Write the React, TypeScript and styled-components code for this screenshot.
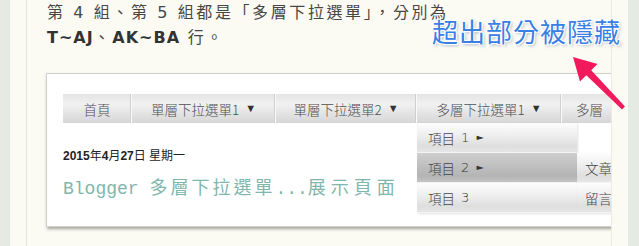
import React from "react";
import styled, { createGlobalStyle } from "styled-components";

const GlobalStyle = createGlobalStyle`
  html, body {
    margin: 0;
    padding: 0;
    background: #e5eae2;
    overflow: hidden;
  }
`;

const Page = styled.div`
  position: relative;
  width: 639px;
  height: 246px;
  overflow: hidden;
`;

const Column = styled.div`
  margin-left: 10px;
  width: 618px;
  height: 246px;
  padding-left: 16px;
  box-sizing: border-box;
  background: #fbfbf3;
`;

const Post = styled.div`
  width: 586px;
  height: 100%;
  box-sizing: border-box;
  padding-left: 19px;
  border-left: 1px solid #e3e3d9;
  border-right: 1px solid #ecece1;
  overflow: hidden;
`;

const Para = styled.p`
  margin: 0 0 0 1px;
  font-family: "DejaVu Sans", "Noto Sans CJK TC", sans-serif;
  font-size: 16px;
  line-height: 25px;
  letter-spacing: 2.6px;
  color: #474747;

  b {
    color: #333;
    letter-spacing: 1px;
  }
`;

const Shot = styled.div`
  position: relative;
  margin-top: 23px;
  width: 620px;
  height: 154px;
  box-sizing: border-box;
  padding: 20px 0 0 16px;
  background: #fff;
  border: 1px solid #d2d2cc;
  box-shadow: 1px 2px 3px rgba(0, 0, 0, 0.35);
`;

const Nav = styled.div`
  display: flex;
  height: 29px;
  background: linear-gradient(to bottom, #e4e4e4 0%, #f1f1f1 35%, #e2e2e2 70%, #d6d6d6 100%);
`;

const NavItem = styled.div<{ $w: number }>`
  flex: none;
  width: ${(p) => p.$w}px;
  box-sizing: border-box;
  display: flex;
  align-items: center;
  justify-content: center;
  white-space: nowrap;
  border-right: 1px solid #fafafa;
  box-shadow: inset -2px 0 0 -1px #cfcfcf;
  font-family: "Noto Sans CJK TC", sans-serif;
  font-size: 13.5px;
  font-weight: 300;
  color: #4e4e4e;
`;

const NavLast = styled(NavItem)`
  justify-content: flex-start;
  padding-left: 14px;
  border-right: none;
  box-shadow: none;
`;

const Caret = styled.span`
  margin-left: 6px;
  font-family: "DejaVu Sans", sans-serif;
  font-size: 11px;
  color: #333;
`;

const Drop = styled.div<{ $left: number; $top: number; $w: number }>`
  position: absolute;
  left: ${(p) => p.$left}px;
  top: ${(p) => p.$top}px;
  width: ${(p) => p.$w}px;
  display: flex;
  flex-direction: column;
  box-shadow: 1px 1px 2px rgba(0, 0, 0, 0.12);
`;

const DropItem = styled.div<{ $active?: boolean; $pad?: number }>`
  height: 30px;
  display: flex;
  align-items: center;
  padding-left: ${(p) => p.$pad ?? 11}px;
  white-space: nowrap;
  font-family: "Noto Sans CJK TC", sans-serif;
  font-size: 13.5px;
  font-weight: 300;
  color: #444;
  background: ${(p) =>
    p.$active
      ? "linear-gradient(to bottom, #cfcfcf 0%, #bdbdbd 50%, #b4b4b4 80%, #c4c4c4 100%)"
      : "linear-gradient(to bottom, #fdfdfd 0%, #efefef 40%, #dedede 80%, #e6e6e6 100%)"};
  border-bottom: 1px solid #f4f4f4;
  box-sizing: border-box;
`;

const Num = styled.span`
  margin-left: 6px;
  font-family: "DejaVu Sans", sans-serif;
  font-size: 13px;
  color: #333;
`;

const Pointer = styled.span`
  margin-left: 5px;
  font-family: "DejaVu Sans", sans-serif;
  font-size: 12px;
  transform: scaleY(0.6);
  display: inline-block;
  color: #333;
`;

const DateLine = styled.div`
  margin-top: 26px;
  font-family: "Liberation Sans", "Noto Sans CJK TC", sans-serif;
  font-size: 12px;
  line-height: 14px;
  color: #222;

  b {
    font-weight: 700;
  }
`;

const Title = styled.div`
  margin-top: 14px;
  font-family: "Liberation Mono", "Noto Sans CJK TC", monospace;
  font-size: 18px;
  line-height: 24px;
  color: #80b6ac;
  white-space: nowrap;
`;

const Wide = styled.span<{ $ls: number }>`
  letter-spacing: ${(p) => p.$ls}px;
`;

const Note = styled.div`
  position: absolute;
  left: 432px;
  top: 14px;
  font-family: "Noto Sans CJK TC", sans-serif;
  font-size: 26px;
  line-height: 34px;
  letter-spacing: 1px;
  color: #3a80e4;
  white-space: nowrap;
  text-shadow: 1px 1px 0 #fff, -1px -1px 0 #fff, 1px -1px 0 #fff, -1px 1px 0 #fff,
    2px 2px 3px rgba(120, 140, 170, 0.6);
`;

const Arrow = styled.svg`
  position: absolute;
  left: 560px;
  top: 50px;
`;

const navItems = [
  { label: "首頁", w: 69 },
  { label: "單層下拉選單1", w: 144, caret: true },
  { label: "單層下拉選單2", w: 141, caret: true },
  { label: "多層下拉選單1", w: 145, caret: true },
];

export default function App() {
  return (
    <>
      <GlobalStyle />
      <Page>
        <Column>
          <Post>
            <Para>
              第 4 組、第 5 組都是「多層下拉選單」，分別為
              <br />
              <b>T~AJ</b>、<b>AK~BA</b> 行。
            </Para>
            <Shot>
              <Nav>
                {navItems.map((n) => (
                  <NavItem key={n.label} $w={n.w}>
                    {n.label}
                    {n.caret && <Caret>▼</Caret>}
                  </NavItem>
                ))}
                <NavLast $w={50}>多層</NavLast>
              </Nav>
              <DateLine>
                <b>2015</b>年<b>4</b>月<b>27</b>日 星期一
              </DateLine>
              <Title>
                Blogger <Wide $ls={3}>多層下拉選單</Wide>...<Wide $ls={5}>展示頁面</Wide>
              </Title>
              <Drop $left={370} $top={49} $w={160}>
                <DropItem>
                  項目<Num>1</Num>
                  <Pointer>►</Pointer>
                </DropItem>
                <DropItem $active>
                  項目<Num>2</Num>
                  <Pointer>►</Pointer>
                </DropItem>
                <DropItem>
                  項目<Num>3</Num>
                </DropItem>
              </Drop>
              <Drop $left={530} $top={79} $w={60}>
                <DropItem $pad={8}>文章</DropItem>
                <DropItem $pad={8}>留言</DropItem>
              </Drop>
            </Shot>
          </Post>
        </Column>
        <Note>超出部分被隱藏</Note>
        <Arrow width="79" height="70" viewBox="0 0 79 70">
          <polygon
            points="13,7 37.5,14 31.2,20.3 65,56.6 62,59.6 26.3,25.2 20,31.6"
            fill="#f21a5d"
          />
        </Arrow>
      </Page>
    </>
  );
}
